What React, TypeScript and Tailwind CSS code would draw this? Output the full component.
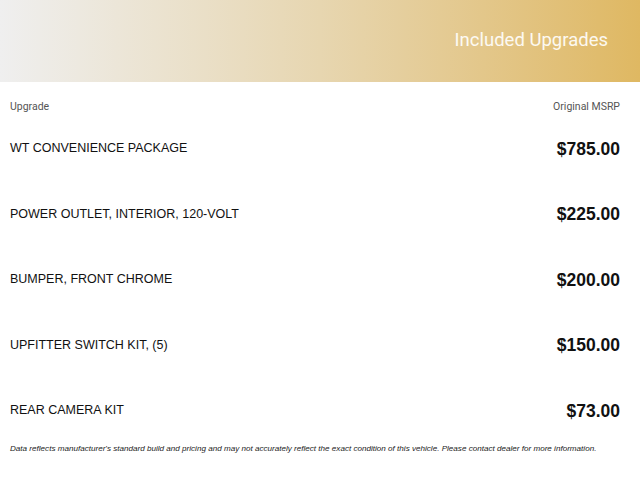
export default function App() {
  const items = [
    ["WT CONVENIENCE PACKAGE", "$785.00"],
    ["POWER OUTLET, INTERIOR, 120-VOLT", "$225.00"],
    ["BUMPER, FRONT CHROME", "$200.00"],
    ["UPFITTER SWITCH KIT, (5)", "$150.00"],
    ["REAR CAMERA KIT", "$73.00"],
  ];
  return (
    <div className="w-[640px] h-[480px] bg-white overflow-hidden">
      <div className="h-[82px] bg-gradient-to-r from-[#efefef] via-[#e7d6b0] to-[#dfb862] flex items-center justify-end pr-[32px]">
        <div className="text-[18.5px] text-white/90 font-['Roboto',sans-serif]">Included Upgrades</div>
      </div>
      <div className="px-[10px] pr-[20px]">
        <div className="flex justify-between pt-[18px] text-[10.5px] text-[#555] font-['Roboto',sans-serif] leading-[14px]">
          <span>Upgrade</span>
          <span>Original MSRP</span>
        </div>
        <div className="flex flex-col font-['Liberation_Sans',Arial,sans-serif] mt-[2px]">
          {items.map(([name, price], i) => (
            <div key={i} className="flex justify-between items-center h-[65.5px]">
              <span className="text-[12.5px] text-[#111]">{name}</span>
              <span className="text-[17.5px] font-bold text-[#111]">{price}</span>
            </div>
          ))}
        </div>
        <div className="mt-[-1px] text-[8.1px] italic text-[#222] font-['Liberation_Sans',Arial,sans-serif]">
          Data reflects manufacturer's standard build and pricing and may not accurately reflect the exact condition of this vehicle. Please contact dealer for more information.
        </div>
      </div>
    </div>
  );
}
